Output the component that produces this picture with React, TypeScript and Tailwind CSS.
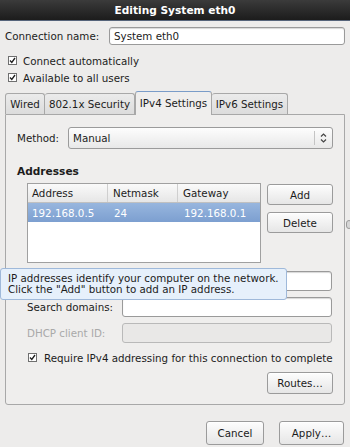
import React from "react";

const Check = () => (
  <svg width="9" height="9" viewBox="0 0 9 9" className="shrink-0">
    <rect x="0.5" y="0.5" width="8" height="8" fill="#ffffff" stroke="#6f6f6f" />
    <path d="M2 4.5 L3.8 6.5 L7 2" fill="none" stroke="#1e1e1e" strokeWidth="1.3" />
  </svg>
);

const Btn = ({ children, className = "" }: { children: React.ReactNode; className?: string }) => (
  <div
    className={
      "flex items-center justify-center rounded-[3px] border border-[#9b9b9b] bg-gradient-to-b from-[#fdfdfd] to-[#e6e6e6] text-[#1a1a1a] shadow-[inset_0_1px_0_#ffffff] " +
      className
    }
  >
    {children}
  </div>
);

const Input = ({ children, className = "" }: { children?: React.ReactNode; className?: string }) => (
  <div
    className={
      "flex items-center rounded-[3px] border border-[#9a9a9a] bg-white px-[4px] shadow-[inset_0_1px_1px_#d8d8d8] " +
      className
    }
  >
    {children}
  </div>
);

export default function App() {
  return (
    <div
      className="relative flex h-[447px] w-[350px] flex-col overflow-hidden whitespace-nowrap bg-[#edeceb] text-[10.3px] leading-[12px] text-[#1c1c1c]"
      style={{ fontFamily: '"DejaVu Sans", "Liberation Sans", sans-serif' }}
    >
      {/* title bar */}
      <div className="flex h-[21px] shrink-0 items-center justify-center border-b border-[#56647a] bg-gradient-to-b from-[#3b3b3b] to-[#1c1c1c] text-[10.6px] font-bold text-white">
        Editing System eth0
      </div>

      <div className="flex flex-col px-[5px]">
        {/* connection name */}
        <div className="mt-[6px] flex h-[18px] items-center">
          <div className="w-[104px]">Connection name:</div>
          <Input className="h-[18px] w-[236px]">System eth0</Input>
        </div>

        <div className="mt-[7px] flex h-[17px] items-center gap-[6px] pl-[3px]">
          <Check />
          <span>Connect automatically</span>
        </div>
        <div className="flex h-[17px] items-center gap-[6px] pl-[3px]">
          <Check />
          <span>Available to all users</span>
        </div>

        {/* tabs */}
        <div className="mt-[5px] flex h-[23px] items-end">
          <div className="flex h-[21px] w-[40px] items-center justify-center rounded-t-[3px] border border-b-0 border-[#a8a8a8] bg-gradient-to-b from-[#ebebeb] to-[#dcdcdc]">
            Wired
          </div>
          <div className="flex h-[21px] w-[90px] items-center justify-center rounded-t-[3px] border border-b-0 border-l-0 border-[#a8a8a8] bg-gradient-to-b from-[#ebebeb] to-[#dcdcdc]">
            802.1x Security
          </div>
          <div className="relative z-10 mb-[-1px] flex h-[24px] w-[77px] items-center justify-center rounded-t-[3px] border border-b-0 border-[#a8a8a8] border-t-[#7a9cc8] bg-[#efeeed] pb-[2px]">
            IPv4 Settings
          </div>
          <div className="flex h-[21px] w-[76px] items-center justify-center rounded-t-[3px] border border-b-0 border-l-0 border-[#a8a8a8] bg-gradient-to-b from-[#ebebeb] to-[#dcdcdc]">
            IPv6 Settings
          </div>
        </div>

        {/* panel */}
        <div className="flex h-[291px] w-[340px] flex-col rounded-b-[3px] border border-[#a8a8a8] bg-[#efeeed] pl-[11px] pr-[11px]">
          <div className="mt-[12px] flex h-[22px] items-center">
            <div className="w-[51px]">Method:</div>
            <div className="flex h-[22px] w-[265px] items-center rounded-[3px] border border-[#9b9b9b] bg-gradient-to-b from-[#fdfdfd] to-[#e8e8e8] pl-[4px]">
              <span className="flex-1">Manual</span>
              <div className="h-[14px] w-px bg-[#c4c4c4]" />
              <svg width="17" height="12" viewBox="0 0 17 12">
                <path d="M6 4.5 L8.5 2 L11 4.5" fill="none" stroke="#444" strokeWidth="1.2" />
                <path d="M6 7.5 L8.5 10 L11 7.5" fill="none" stroke="#444" strokeWidth="1.2" />
              </svg>
            </div>
          </div>

          <div className="mt-[16px] h-[14px] text-[10.6px] font-bold">Addresses</div>

          <div className="mt-[4px] flex">
            <div className="ml-[10px] flex h-[80px] w-[234px] flex-col border border-[#a0a0a0] bg-white">
              <div className="flex h-[19px] items-center border-b border-[#c0c0c0] bg-gradient-to-b from-[#fafafa] to-[#e6e6e6]">
                <div className="flex h-full w-[80px] items-center border-r border-[#cfcfcf] pl-[4px]">Address</div>
                <div className="flex h-full w-[70px] items-center border-r border-[#cfcfcf] pl-[5px]">Netmask</div>
                <div className="flex h-full flex-1 items-center pl-[5px]">Gateway</div>
              </div>
              <div className="flex h-[19px] items-center bg-gradient-to-b from-[#98b6de] to-[#7c9fd0] text-white">
                <div className="w-[80px] pl-[4px]">192.168.0.5</div>
                <div className="w-[70px] pl-[6px]">24</div>
                <div className="flex-1 pl-[6px]">192.168.0.1</div>
              </div>
            </div>
            <div className="ml-[6px] mt-[1px] flex flex-col gap-[7px]">
              <Btn className="h-[21px] w-[66px]">Add</Btn>
              <Btn className="h-[21px] w-[66px]">Delete</Btn>
            </div>
          </div>

          <div className="mt-[8px] flex h-[20px] items-center">
            <div className="ml-[10px] w-[95px]" />
            <Input className="h-[20px] w-[210px]" />
          </div>
          <div className="mt-[6px] flex h-[20px] items-center">
            <div className="ml-[10px] w-[95px]">Search domains:</div>
            <Input className="h-[20px] w-[210px]" />
          </div>
          <div className="mt-[6px] flex h-[20px] items-center">
            <div className="ml-[10px] w-[95px] text-[#a9a9a9]">DHCP client ID:</div>
            <div className="h-[20px] w-[210px] rounded-[3px] border border-[#b9b9b9] bg-[#e9e8e7]" />
          </div>

          <div className="mt-[6px] flex h-[17px] items-center gap-[7px] pl-[11px]">
            <Check />
            <span>Require IPv4 addressing for this connection to complete</span>
          </div>

          <div className="mt-[6px] flex justify-end">
            <Btn className="h-[22px] w-[66px]">Routes…</Btn>
          </div>
        </div>

        {/* bottom buttons */}
        <div className="mt-[16px] flex justify-end gap-[15px] pr-[1px]">
          <Btn className="h-[24px] w-[58px]">Cancel</Btn>
          <Btn className="h-[24px] w-[65px]">Apply…</Btn>
        </div>
      </div>

      {/* tooltip */}
      <div className="absolute left-0 top-[268px] flex h-[32px] w-[287px] flex-col justify-center rounded-[3px] border border-[#9fb9da] bg-[#e6f0fb] pl-[7px] leading-[11px]">
        <div>IP addresses identify your computer on the network.</div>
        <div>Click the "Add" button to add an IP address.</div>
      </div>

      {/* partial widget at right edge */}
      <div className="absolute left-[346px] top-[220px] h-[9px] w-[6px] rounded-full border border-[#9a9a9a] bg-[#d6d6d6]" />
    </div>
  );
}
